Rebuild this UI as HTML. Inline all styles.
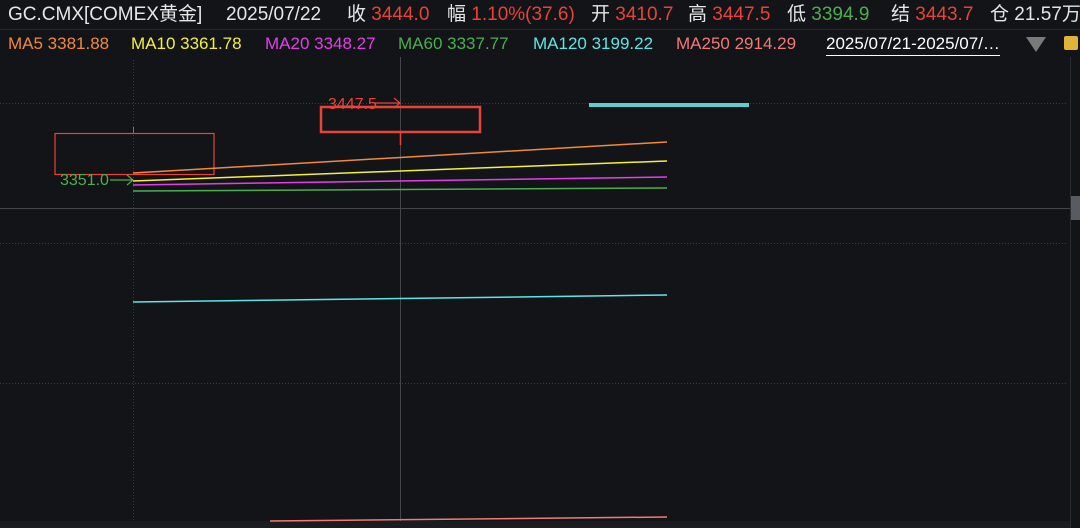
<!DOCTYPE html>
<html><head><meta charset="utf-8"><style>
html,body{margin:0;padding:0;background:#131418;width:1080px;height:528px;overflow:hidden;font-family:"Liberation Sans","Noto Sans CJK SC",sans-serif}
.t{position:absolute;white-space:nowrap}
.a{top:4px;font-size:19px;line-height:22px;height:22px;color:#e6e6e6}
.b{top:34px;font-size:17px;line-height:20px}
.red{color:#e8423a}.grn{color:#4cae4f}
</style></head><body>
<div class="t a" style="left:8px">GC.CMX[COMEX黄金]</div>
<div class="t a" style="left:226px">2025/07/22</div>
<div class="t a" style="left:347px">收 <span class="red">3444.0</span></div>
<div class="t a" style="left:447px">幅 <span class="red">1.10%(37.6)</span></div>
<div class="t a" style="left:591px">开 <span class="red">3410.7</span></div>
<div class="t a" style="left:688px">高 <span class="red">3447.5</span></div>
<div class="t a" style="left:787px">低 <span class="grn">3394.9</span></div>
<div class="t a" style="left:891px">结 <span class="red">3443.7</span></div>
<div class="t a" style="left:990px">仓 21.57万</div>
<div style="position:absolute;top:29px;left:0;width:1080px;height:1px;background:#26272c"></div>
<div class="t b" style="left:8px;color:#f08a3a">MA5 3381.88</div>
<div class="t b" style="left:131px;color:#f4f03c">MA10 3361.78</div>
<div class="t b" style="left:265px;color:#e43ee8">MA20 3348.27</div>
<div class="t b" style="left:398px;color:#4cae4f">MA60 3337.77</div>
<div class="t b" style="left:533px;color:#5de6e6">MA120 3199.22</div>
<div class="t b" style="left:676px;color:#f07a78">MA250 2914.29</div>
<div class="t b" style="left:826px;color:#fff;border-bottom:1.5px solid #fff;padding-bottom:1px">2025/07/21-2025/07/…</div>
<svg width="1080" height="528" style="position:absolute;left:0;top:0">
<polygon points="1026,37 1046,37 1036,52" fill="#7a7a7a"/>
<rect x="1064" y="36" width="14" height="14" rx="2" fill="#e0b43a"/>
<g stroke="#3a3b40" stroke-dasharray="1,2" stroke-width="1">
<line x1="0" y1="103.5" x2="1068" y2="103.5"/><line x1="0" y1="243.5" x2="1068" y2="243.5"/><line x1="0" y1="383.5" x2="1068" y2="383.5"/>
<line x1="133.5" y1="60" x2="133.5" y2="521"/></g>
<line x1="0" y1="208.5" x2="1070" y2="208.5" stroke="#45464b"/>
<line x1="400.5" y1="57" x2="400.5" y2="528" stroke="#45464b"/>
<line x1="1070.5" y1="57" x2="1070.5" y2="528" stroke="#2c2d32"/>
<rect x="1071" y="196" width="9" height="24" fill="#5a5b62"/>
<rect x="0" y="521" width="1070" height="7" fill="#1b1c20"/>
<rect x="55" y="133.5" width="159" height="41" fill="none" stroke="#e8423a" stroke-width="1.2"/>
<line x1="133.5" y1="127" x2="133.5" y2="133" stroke="#e8423a"/>
<rect x="321" y="107" width="159" height="25" fill="none" stroke="#e8423a" stroke-width="2.5"/>
<line x1="400.5" y1="133" x2="400.5" y2="145" stroke="#e8423a" stroke-width="1.5"/>
<rect x="589" y="103" width="160" height="4" fill="#5ccfd0"/>
<line x1="133" y1="173" x2="667" y2="142" stroke="#f08a3a" stroke-width="1.5"/>
<line x1="133" y1="181" x2="667" y2="161" stroke="#f4f03c" stroke-width="1.5"/>
<line x1="133" y1="185" x2="667" y2="177" stroke="#e43ee8" stroke-width="1.5"/>
<line x1="133" y1="191" x2="667" y2="188" stroke="#4cae4f" stroke-width="1.5"/>
<line x1="133" y1="302" x2="667" y2="295" stroke="#5de6e6" stroke-width="1.5"/>
<line x1="270" y1="521" x2="667" y2="517" stroke="#f07a78" stroke-width="1.5"/>
<text x="328" y="109" fill="#e8423a" font-size="16" font-family="Liberation Sans">3447.5</text>
<path d="M374 103H400M394 98L400 103L394 108" stroke="#e8423a" fill="none" stroke-width="1.2"/>
<text x="60" y="185" fill="#4cae4f" font-size="16" font-family="Liberation Sans">3351.0</text>
<path d="M110 180H133M127 175L133 180L127 185" stroke="#4cae4f" fill="none" stroke-width="1.2"/>
</svg>
</body></html>
